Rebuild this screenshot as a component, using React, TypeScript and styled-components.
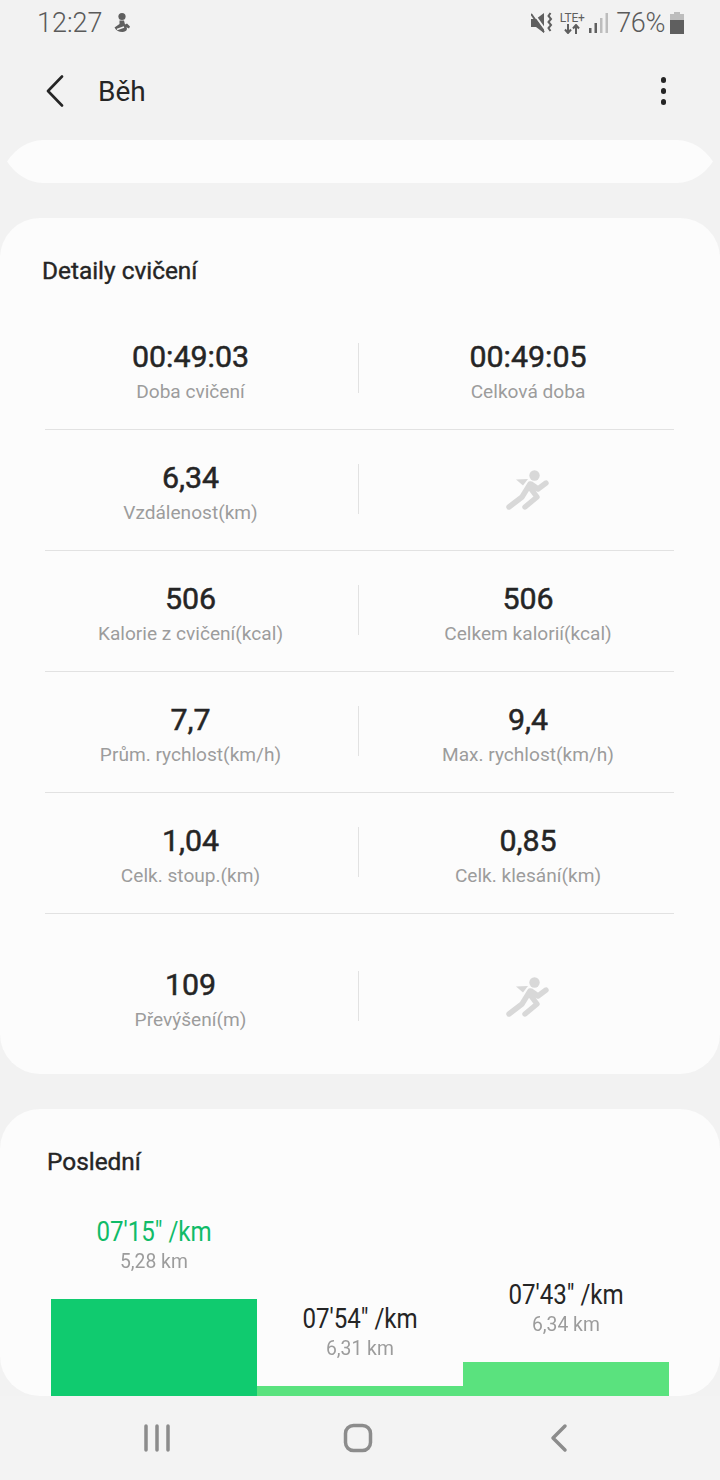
import styled, { createGlobalStyle } from "styled-components";

const metricRows = [
  [
    { value: "00:49:03", label: "Doba cvičení" },
    { value: "00:49:05", label: "Celková doba" },
  ],
  [{ value: "6,34", label: "Vzdálenost(km)" }, null],
  [
    { value: "506", label: "Kalorie z cvičení(kcal)" },
    { value: "506", label: "Celkem kalorií(kcal)" },
  ],
  [
    { value: "7,7", label: "Prům. rychlost(km/h)" },
    { value: "9,4", label: "Max. rychlost(km/h)" },
  ],
  [
    { value: "1,04", label: "Celk. stoup.(km)" },
    { value: "0,85", label: "Celk. klesání(km)" },
  ],
  [{ value: "109", label: "Převýšení(m)" }, null],
];

const recent = [
  { pace: `07'15" /km`, distance: "5,28 km", height: 97, best: true },
  { pace: `07'54" /km`, distance: "6,31 km", height: 10, best: false },
  { pace: `07'43" /km`, distance: "6,34 km", height: 34, best: false },
];

function RunnerIcon() {
  return (
    <Runner viewBox="0 0 44 40" width="44" height="40">
      <circle cx="28.5" cy="5.5" r="5.2" fill="#d8d8d8" />
      <path d="M10 9.500 L22 9 L17 15.500 Z" fill="#d8d8d8" />
      <path
        d="M25 14 L32 19 L40 13 M24 14 L16 27 L3 37 M25 19 L31 27 L19 37"
        fill="none"
        stroke="#d8d8d8"
        strokeWidth="5.4"
        strokeLinecap="round"
        strokeLinejoin="round"
      />
    </Runner>
  );
}

export default function App() {
  return (
    <Page>
      <GlobalStyle />
      <StatusBar>
        <StatusLeft>
          <StatusText>12:27</StatusText>
          <svg width="18" height="22" viewBox="0 0 18 22">
            <circle cx="9" cy="4.500" r="3.600" fill="#5f5f5f" />
            <path
              d="M6.500 8.500h4.500l1 4 2-1 3 3-1 2-3-1.500c2 1 1 5-3.500 5-3.500 0-6.500-1.500-8-4.500l5-3.500z"
              fill="#5f5f5f"
            />
            <path d="M4 17.500l7-2.500" stroke="#f2f2f2" strokeWidth="1.500" />
          </svg>
        </StatusLeft>
        <StatusRight>
          <svg width="22" height="22" viewBox="0 0 22 22">
            <path d="M0 7h5l8-6v20l-8-6H0z" fill="#5f5f5f" />
            <path d="M1.500 0l13 18" stroke="#f2f2f2" strokeWidth="2" />
            <path
              d="M0.500 2.500l12 17"
              stroke="#5f5f5f"
              strokeWidth="2"
              strokeLinecap="round"
            />
            <path
              d="M19.500 1l-2 3 2.500 3-2.500 3 2.500 3-2.500 3 2 3"
              fill="none"
              stroke="#5f5f5f"
              strokeWidth="2"
            />
          </svg>
          <NetworkBadge>
            <NetworkLabel>LTE+</NetworkLabel>
            <svg width="16" height="10" viewBox="0 0 16 10">
              <path
                d="M4 0v8M1 5.500L4 9l3-3.500M12 10V2M9 4.500L12 1l3 3.500"
                fill="none"
                stroke="#5f5f5f"
                strokeWidth="2"
              />
            </svg>
          </NetworkBadge>
          <svg width="19" height="22" viewBox="0 0 19 22">
            <rect x="0" y="16" width="2.500" height="5" fill="#5f5f5f" />
            <rect x="5.500" y="11" width="2.500" height="10" fill="#5f5f5f" />
            <rect x="11" y="6" width="2.500" height="15" fill="#bdbdbd" />
            <rect x="16.500" y="1" width="2.500" height="20" fill="#bdbdbd" />
          </svg>
          <BatteryText>76%</BatteryText>
          <svg width="14" height="22" viewBox="0 0 14 22">
            <path d="M4 0h6v2h4v7H0V2h4z" fill="#bdbdbd" />
            <rect y="8" width="14" height="14" fill="#5f5f5f" />
          </svg>
        </StatusRight>
      </StatusBar>

      <AppBar>
        <BackIcon width="18" height="32" viewBox="0 0 18 32">
          <path d="M16 1.500L2 16l14 14.500" />
        </BackIcon>
        <Title>Běh</Title>
        <MoreDots>
          <span />
          <span />
          <span />
        </MoreDots>
      </AppBar>

      <ClippedCard />

      <DetailCard>
        <DetailTitle>Detaily cvičení</DetailTitle>
        {metricRows.map((row, i) => (
          <MetricRow key={i} $last={i === metricRows.length - 1}>
            <MetricGrid>
              {row.map((metric, j) => (
                <MetricCell key={j} $right={j === 1}>
                  {metric ? (
                    <>
                      <MetricValue>{metric.value}</MetricValue>
                      <MetricLabel>{metric.label}</MetricLabel>
                    </>
                  ) : (
                    <RunnerIcon />
                  )}
                </MetricCell>
              ))}
            </MetricGrid>
          </MetricRow>
        ))}
      </DetailCard>

      <RecentCard>
        <RecentTitle>Poslední</RecentTitle>
        <Chart>
          {recent.map((item) => (
            <ChartColumn key={item.pace}>
              <Pace $best={item.best}>{item.pace}</Pace>
              <Distance>{item.distance}</Distance>
              <Bar $best={item.best} style={{ height: item.height }} />
            </ChartColumn>
          ))}
        </Chart>
      </RecentCard>

      <NavBar>
        <svg width="28" height="30" viewBox="0 0 28 30">
          <path d="M3 3v24M14 3v24M25 3v24" />
        </svg>
        <svg width="30" height="30" viewBox="0 0 30 30">
          <rect x="2.500" y="2.500" width="25" height="25" rx="8" />
        </svg>
        <svg width="20" height="30" viewBox="0 0 20 30">
          <path d="M16 3L4 15l12 12" />
        </svg>
      </NavBar>
    </Page>
  );
}

const GlobalStyle = createGlobalStyle`
  html, body {
    margin: 0;
    padding: 0;
    background: #f2f2f2;
  }
`;

const Page = styled.div`
  display: flex;
  flex-direction: column;
  width: 720px;
  height: 1480px;
  overflow: hidden;
  background: #f2f2f2;
  font-family: Roboto, "Noto Sans", sans-serif;
  color: #252525;
`;

const StatusBar = styled.div`
  display: flex;
  justify-content: space-between;
  align-items: center;
  height: 46px;
  padding: 0 36px 0 37px;
  box-sizing: border-box;
`;

const StatusLeft = styled.div`
  display: flex;
  align-items: center;
  gap: 10px;
`;

const StatusRight = styled.div`
  display: flex;
  align-items: center;
  gap: 5px;
`;

const StatusText = styled.span`
  font-size: 27px;
  font-weight: 300;
  color: #5a5a5a;
`;

const BatteryText = styled(StatusText)`
  margin-left: 3px;
  letter-spacing: -0.4px;
`;

const NetworkBadge = styled.div`
  display: flex;
  flex-direction: column;
  align-items: center;
  width: 24px;
  margin-left: 2px;
`;

const NetworkLabel = styled.span`
  font-size: 12px;
  line-height: 12px;
  letter-spacing: -0.2px;
  color: #5f5f5f;
`;

const AppBar = styled.div`
  display: flex;
  align-items: center;
  height: 94px;
  padding: 0 54px 4px 46px;
  box-sizing: border-box;
`;

const BackIcon = styled.svg`
  flex: none;
  fill: none;
  stroke: #252525;
  stroke-width: 2.6;
  stroke-linecap: round;
  stroke-linejoin: round;
`;

const Title = styled.h1`
  flex: 1;
  margin: 0 0 0 34px;
  font-size: 28px;
  font-weight: 400;
`;

const MoreDots = styled.div`
  display: flex;
  flex-direction: column;
  gap: 5.5px;

  span {
    width: 5.5px;
    height: 5.5px;
    border-radius: 50%;
    background: #252525;
  }
`;

const ClippedCard = styled.div`
  flex: none;
  width: 706px;
  height: 43px;
  margin: 0 7px 35px;
  background: #fcfcfc;
  clip-path: path(
    "M0 21.500 Q14 1 36 0 L670 0 Q692 1 706 21.500 Q692 42 670 43 L36 43 Q14 42 0 21.500 Z"
  );
`;

const Card = styled.section`
  flex: none;
  background: #fcfcfc;
  border-radius: 40px;
  overflow: hidden;
`;

const DetailCard = styled(Card)`
  height: 856px;
  margin-bottom: 35px;
  padding: 0 46px 0 45px;
  box-sizing: border-box;
`;

const DetailTitle = styled.h2`
  height: 91px;
  margin: 0 0 0 -3px;
  padding-top: 38px;
  box-sizing: border-box;
  font-size: 24.4px;
  line-height: 30px;
  font-weight: 400;
  -webkit-text-stroke: 0.4px #252525;
`;

const MetricRow = styled.div<{ $last: boolean }>`
  height: ${(p) => (p.$last ? "159px" : "121px")};
  padding-top: ${(p) => (p.$last ? "57px" : "34px")};
  box-sizing: border-box;
  border-bottom: ${(p) => (p.$last ? "none" : "1px solid #e2e2e2")};
`;

const MetricGrid = styled.div`
  display: grid;
  grid-template-columns: 337px 338px;
  margin-left: -24px;
  width: 675px;
`;

const MetricCell = styled.div<{ $right: boolean }>`
  position: relative;
  display: flex;
  flex-direction: column;
  align-items: center;
  height: 50px;
  padding-left: 2px;

  &::before {
    content: "";
    display: ${(p) => (p.$right ? "block" : "none")};
    position: absolute;
    left: 0;
    top: 0;
    width: 1px;
    height: 50px;
    background: #e2e2e2;
  }
`;

const MetricValue = styled.div`
  font-size: 30.4px;
  line-height: 28px;
  font-weight: 400;
  white-space: nowrap;
  -webkit-text-stroke: 0.5px #252525;
`;

const MetricLabel = styled.div`
  margin-top: 10px;
  font-size: 19.1px;
  line-height: 22px;
  color: #9c9c9c;
  white-space: nowrap;
`;

const Runner = styled.svg`
  margin-top: 6px;
  filter: blur(0.5px);
`;

const RecentCard = styled(Card)`
  display: flex;
  flex-direction: column;
  height: 287px;
  padding: 0 51px;
  box-sizing: border-box;
`;

const RecentTitle = styled.h2`
  margin: 0 0 0 -4px;
  padding-top: 38px;
  font-size: 24.4px;
  line-height: 30px;
  font-weight: 400;
  -webkit-text-stroke: 0.4px #252525;
`;

const Chart = styled.div`
  flex: 1;
  display: grid;
  grid-template-columns: repeat(3, 206px);
  align-items: end;
`;

const ChartColumn = styled.div`
  display: flex;
  flex-direction: column;
  align-items: center;
`;

const Pace = styled.div<{ $best: boolean }>`
  font-size: 28px;
  line-height: 30px;
  color: ${(p) => (p.$best ? "#10bb68" : "#252525")};
  transform: translateY(1px) scaleX(0.86);
  white-space: nowrap;
`;

const Distance = styled.div`
  margin-bottom: 23px;
  font-size: 21px;
  line-height: 30px;
  color: #9c9c9c;
  transform: scaleX(0.92);
`;

const Bar = styled.div<{ $best: boolean }>`
  width: 100%;
  background: ${(p) => (p.$best ? "#10cb6f" : "#5ae27e")};
`;

const NavBar = styled.nav`
  flex: none;
  display: grid;
  grid-template-columns: repeat(3, 201px);
  justify-content: center;
  justify-items: center;
  align-items: center;
  height: 84px;
  padding-right: 5px;
  box-sizing: border-box;
  background: #f3f3f3;

  svg {
    fill: none;
    stroke: #8c8c8c;
    stroke-width: 3.5;
    stroke-linecap: round;
    stroke-linejoin: round;
  }
`;
